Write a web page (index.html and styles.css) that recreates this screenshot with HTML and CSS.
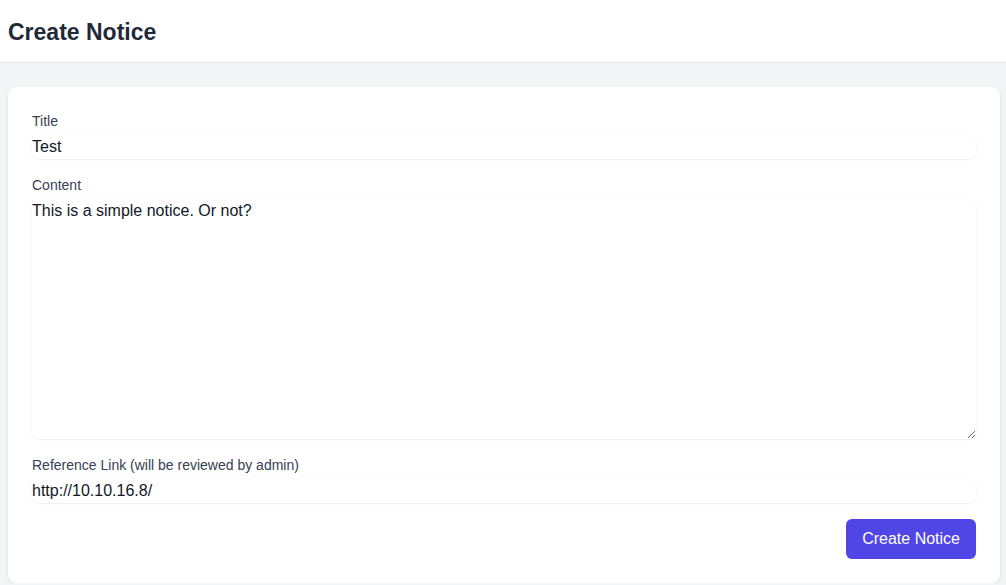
FILE: index.html
```html
<!DOCTYPE html>
<html lang="en">

<head>
    <meta charset="UTF-8">
    <meta name="viewport" content="width=device-width, initial-scale=1.0">
    <title>Create Notice</title>
    <link rel="stylesheet" href="styles.css">
</head>

<body>
    <header class="page-header">
        <h1>Create Notice</h1>
    </header>

    <main class="card">
        <form class="notice-form" action="#" method="POST">
            <div class="field">
                <label for="title">Title</label>
                <input type="text" id="title" name="title" value="Test">
            </div>

            <div class="field">
                <label for="content">Content</label>
                <textarea id="content" name="content" rows="10">This is a simple notice. Or not?</textarea>
            </div>

            <div class="field">
                <label for="link">Reference Link (will be reviewed by admin)</label>
                <input type="text" id="link" name="link" value="http://10.10.16.8/">
            </div>

            <div class="actions">
                <button class="btn" type="submit">Create Notice</button>
            </div>
        </form>
    </main>
</body>

</html>
```

FILE: styles.css
```css
body {
    font-family: "Liberation Sans", Arial, sans-serif;
    margin: 0;
    background-color: #f3f4f6;
    color: #111827;
}

.page-header {
    background-color: white;
    border-bottom: 1px solid #e5e7eb;
    padding: 16px 8px 14px;
}

.page-header h1 {
    margin: 0;
    font-size: 23px;
    line-height: 32px;
    font-weight: 700;
    color: #1f2937;
}

.card {
    background-color: white;
    margin: 24px 6px 0 8px;
    padding: 24px;
    border-radius: 8px;
    box-shadow: 0 1px 3px rgba(0, 0, 0, 0.1), 0 1px 2px -1px rgba(0, 0, 0, 0.1);
}

.notice-form {
    display: flex;
    flex-direction: column;
    gap: 16px;
}

.field {
    display: flex;
    flex-direction: column;
    gap: 4px;
}

label {
    font-size: 14px;
    line-height: 20px;
    font-weight: 500;
    color: #374151;
}

input[type="text"],
textarea {
    font-family: inherit;
    font-size: 16px;
    line-height: 24px;
    color: #111827;
    border: 0;
    padding: 0;
    margin: 0;
    border-radius: 6px;
    background: white;
    box-shadow: 0 1px 2px rgba(0, 0, 0, 0.05), 0 0 0 1px rgba(0, 0, 0, 0.015);
    outline: none;
}

input[type="text"] {
    height: 24px;
}

textarea {
    height: 240px;
    box-sizing: border-box;
}

.actions {
    display: flex;
    justify-content: flex-end;
}

.btn {
    font-family: inherit;
    font-size: 16px;
    line-height: 24px;
    padding: 8px 16px;
    background-color: #4f46e5;
    color: white;
    border: none;
    border-radius: 6px;
    cursor: pointer;
}

.btn:hover {
    background-color: #4338ca;
}
```
